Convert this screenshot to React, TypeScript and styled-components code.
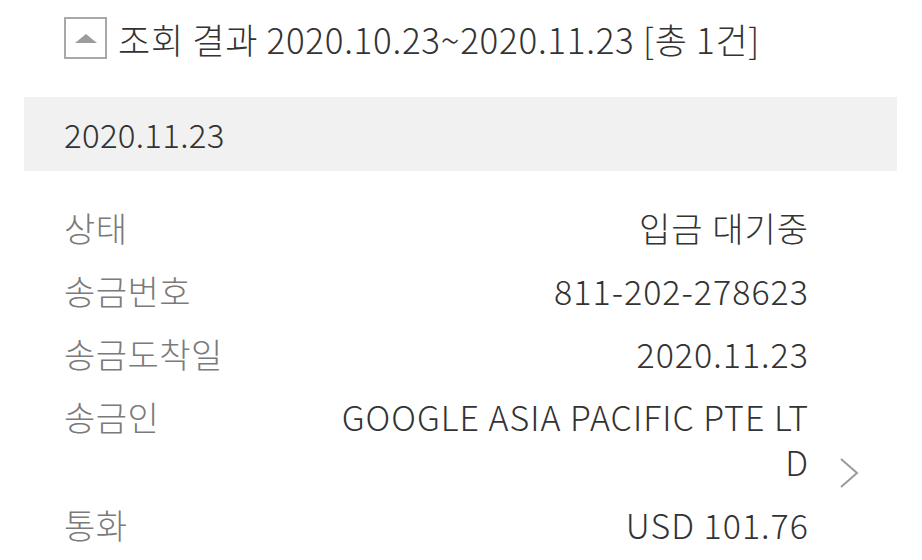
import React from 'react'
import styled, { createGlobalStyle } from 'styled-components'

const GlobalStyle = createGlobalStyle`
  html, body {
    margin: 0;
    padding: 0;
    background: #ffffff;
  }
  body {
    font-family: 'Noto Sans CJK KR', 'Noto Sans', sans-serif;
    color: #333333;
  }
`

interface Detail {
  label: string
  value: string
  link?: boolean
}

const DETAILS: Detail[] = [
  { label: '상태', value: '입금 대기중' },
  { label: '송금번호', value: '811-202-278623' },
  { label: '송금도착일', value: '2020.11.23' },
  { label: '송금인', value: 'GOOGLE ASIA PACIFIC PTE LTD', link: true },
  { label: '통화', value: 'USD 101.76' },
]

function Chevron() {
  return (
    <svg width="22" height="32" viewBox="0 0 22 32" fill="none">
      <path d="M2 2 L18 16 L2 30" stroke="#9a9a9a" strokeWidth="2" />
    </svg>
  )
}

export default function App() {
  return (
    <>
      <GlobalStyle />
      <Page>
        <Header>
          <ToggleBox aria-label="접기">
            <Triangle />
          </ToggleBox>
          <HeaderTitle>조회 결과 2020.10.23~2020.11.23 [총 1건]</HeaderTitle>
        </Header>

        <DateBand>2020.11.23</DateBand>

        <DetailList>
          {DETAILS.map((d) => (
            <DetailRow key={d.label}>
              <Label>{d.label}</Label>
              <Value>{d.value}</Value>
              <Trail>{d.link && <Chevron />}</Trail>
            </DetailRow>
          ))}
        </DetailList>
      </Page>
    </>
  )
}

const Page = styled.div`
  width: 922px;
  height: 560px;
  overflow: hidden;
`

const Header = styled.div`
  display: flex;
  align-items: center;
  gap: 11px;
  height: 76px;
  padding-left: 64px;
`

const ToggleBox = styled.button`
  width: 43px;
  height: 42px;
  box-sizing: border-box;
  border: 2px solid #a8a8a8;
  background: #ffffff;
  padding: 0;
  display: flex;
  align-items: center;
  justify-content: center;
`

const Triangle = styled.span`
  width: 0;
  height: 0;
  border-left: 11px solid transparent;
  border-right: 11px solid transparent;
  border-bottom: 9px solid #9c9c9c;
`

const HeaderTitle = styled.h1`
  margin: 0;
  font-size: 35px;
  font-weight: 300;
  color: #333333;
  letter-spacing: 0.7px;
`

const DateBand = styled.div`
  margin: 21px 25px 0 24px;
  height: 74px;
  background: #f1f1f1;
  padding-left: 40px;
  display: flex;
  align-items: center;
  font-size: 33px;
  font-weight: 300;
  color: #333333;
  letter-spacing: 0.3px;
`

const DetailList = styled.div`
  padding: 34px 0 0 64px;
  display: flex;
  flex-direction: column;
  gap: 18px;
`

const DetailRow = styled.div`
  display: flex;
  align-items: flex-start;
`

const Label = styled.div`
  flex: 1;
  font-size: 34px;
  font-weight: 300;
  line-height: 45px;
  color: #7a7a7a;
  letter-spacing: 0.5px;
`

const Value = styled.div`
  max-width: 476px;
  margin-right: -1px;
  text-align: right;
  font-size: 34px;
  font-weight: 300;
  line-height: 45px;
  color: #333333;
  letter-spacing: 1px;
  word-break: break-all;
`

const Trail = styled.div`
  width: 114px;
  align-self: flex-end;
  display: flex;
  align-items: flex-end;
  padding-left: 31px;
  margin-bottom: -5px;
  box-sizing: border-box;
  height: 34px;
`
